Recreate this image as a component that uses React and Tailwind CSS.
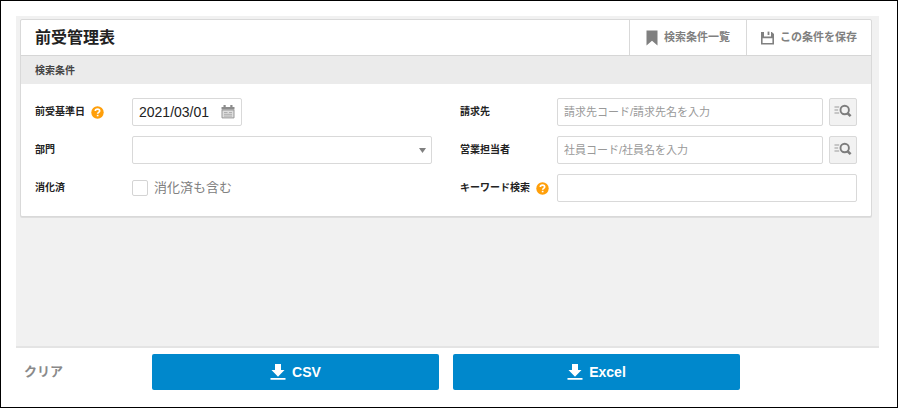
import { useState } from "react";

function BookmarkIcon() {
  return (
    <svg width="12" height="16" viewBox="0 0 12 16" fill="currentColor" aria-hidden="true">
      <path d="M0.5 0.5h11v15L6 10.8 0.5 15.5z" />
    </svg>
  );
}

function SaveIcon() {
  return (
    <svg width="13" height="14" viewBox="0 0 13 14" fill="currentColor" aria-hidden="true">
      <path d="M0 1h3v4.6h7V1h.8L13 3v10.5H0zM1.6 7.2v4.8h9.8V7.2z" fillRule="evenodd" />
      <path d="M6.6 0.6h1.8v3.4H6.6z" />
    </svg>
  );
}

function CalendarIcon() {
  return (
    <svg width="14" height="14" viewBox="0 0 14 14" aria-hidden="true">
      <path d="M0.5 2h13v2.6H.5z" fill="#8c8c8c" />
      <path d="M2.5 0h2.2v3H2.5zM9.3 0h2.2v3H9.3z" fill="#8c8c8c" />
      <path d="M1 5h12v7.9H1z" fill="#dedede" stroke="#979797" />
      <path d="M3 7.5h3.5M8 7.5h3M3 9.3h8M3 11.1h8" stroke="#a8a8a8" strokeWidth="0.9" />
    </svg>
  );
}

function ListSearchIcon() {
  return (
    <svg width="18" height="16" viewBox="0 0 18 16" fill="none" aria-hidden="true">
      <path d="M0.5 3h4.7M0.5 6h3.6M0.5 9h4.7" stroke="#999" strokeWidth="1.2" />
      <circle cx="10.7" cy="6" r="4.2" stroke="#7d7d7d" strokeWidth="1.9" />
      <path d="M13.2 8.8l3.4 3.4" stroke="#7d7d7d" strokeWidth="2.6" />
    </svg>
  );
}

function DownloadIcon() {
  return (
    <svg width="16" height="16" viewBox="0 0 16 16" fill="currentColor" aria-hidden="true">
      <path d="M5 0h6v6h3.5L8 12.8 1.5 6H5zM.5 14h15v1.8H.5z" />
    </svg>
  );
}

function HelpButton({ label }) {
  return (
    <button type="button" aria-label={label} className="shrink-0">
      <svg width="13" height="13" viewBox="0 0 13 13" fill="none" aria-hidden="true">
        <circle cx="6.5" cy="6.5" r="6.2" fill="#ff9f0a" />
        <path d="M4.3 5.1c0-1.3.9-2 2.2-2s2.2.7 2.2 1.8c0 1.4-2.1 1.4-2.1 2.9" stroke="#fff" strokeWidth="1.6" />
        <path d="M5.8 8.8h1.7v1.5H5.8z" fill="#fff" />
      </svg>
    </button>
  );
}

function Field({ id, label, help, children }) {
  return (
    <div className="flex h-7 items-center">
      <div className="flex w-[97px] shrink-0 items-center gap-1.5">
        <label htmlFor={id} className="text-[10px] leading-4 font-bold whitespace-nowrap">{label}</label>
        {help && <HelpButton label={`${label}のヘルプ`} />}
      </div>
      {children}
    </div>
  );
}

const inputClass =
  "h-7 min-w-0 flex-1 rounded-xs border border-[#d9d9d9] bg-white px-1.5 text-[11px] text-[#222] placeholder-[#999] focus:outline-none focus:border-[#0088cc]";

function LookupField({ id, label, placeholder }) {
  return (
    <Field id={id} label={label}>
      <input id={id} type="text" placeholder={placeholder} className={inputClass} />
      <button
        type="button"
        aria-label={`${label}を検索`}
        className="ml-1.5 flex h-7 w-7 shrink-0 items-center justify-center rounded-xs border border-[#d9d9d9] bg-[#f2f2f2]"
      >
        <ListSearchIcon />
      </button>
    </Field>
  );
}

function App() {
  const [date, setDate] = useState("2021/03/01");
  const [includeDone, setIncludeDone] = useState(false);

  return (
    <div className="flex min-h-screen flex-col border border-black bg-white pt-[15px] pr-[18px] pl-[15px] font-['Liberation_Sans','Noto_Sans_CJK_JP',sans-serif] text-[#222]">
      <main className="flex-1 border-b-2 border-[#e4e4e4] bg-[#f1f1f1] pt-[3px] pr-[7px] pb-6 pl-1">
        <section className="rounded-xs border border-[#d9d9d9] bg-white shadow-[0_1px_0_#dedede]">
          {/* Title bar */}
          <header className="flex h-9 items-stretch border-b border-[#d6d6d6]">
            <h1 className="flex flex-1 items-center pl-3.5 text-base leading-5 font-bold">前受管理表</h1>
            <button type="button" className="flex items-center gap-1.5 border-l border-[#d9d9d9] px-4 text-[11px] font-bold text-[#808080]">
              <BookmarkIcon />
              検索条件一覧
            </button>
            <button type="button" className="flex items-center gap-1.5 border-l border-[#d9d9d9] px-3.5 text-[11px] font-bold text-[#808080]">
              <SaveIcon />
              この条件を保存
            </button>
          </header>
          <h2 className="flex h-7 items-center bg-[#ebebeb] pl-3.5 text-[10px] font-bold text-[#444]">検索条件</h2>

          {/* Search conditions */}
          <form className="grid grid-cols-2 gap-x-7 gap-y-2.5 p-3.5">
            <Field id="baseDate" label="前受基準日" help>
              <div className="flex h-7 w-[110px] items-center rounded-xs border border-[#d9d9d9] px-1.5">
                <input
                  id="baseDate"
                  type="text"
                  value={date}
                  onChange={(e) => setDate(e.target.value)}
                  className="min-w-0 flex-1 text-sm focus:outline-none"
                />
                <button type="button" aria-label="カレンダーを開く" className="shrink-0">
                  <CalendarIcon />
                </button>
              </div>
            </Field>
            <LookupField id="billing" label="請求先" placeholder="請求先コード/請求先名を入力" />

            <Field id="department" label="部門">
              <div className="relative flex flex-1">
                <select id="department" className={`${inputClass} appearance-none`}>
                  <option value=""></option>
                </select>
                <svg width="7" height="5" viewBox="0 0 7 5" className="pointer-events-none absolute top-3 right-1.5" aria-hidden="true">
                  <path d="M0 0h7L3.5 5z" fill="#808080" />
                </svg>
              </div>
            </Field>
            <LookupField id="salesRep" label="営業担当者" placeholder="社員コード/社員名を入力" />

            <Field id="includeDone" label="消化済">
              <input
                id="includeDone"
                type="checkbox"
                checked={includeDone}
                onChange={(e) => setIncludeDone(e.target.checked)}
                className="h-4 w-4 appearance-none rounded-xs border border-[#d4d4d4] bg-white checked:bg-[#0088cc]"
              />
              <label htmlFor="includeDone" className="ml-1.5 text-[13px] leading-5 text-[#808080]">消化済も含む</label>
            </Field>
            <Field id="keyword" label="キーワード検索" help>
              <input id="keyword" type="text" className={inputClass} />
            </Field>
          </form>
        </section>
      </main>

      {/* Actions */}
      <footer className="flex items-center pt-1.5 pr-[139px] pb-[17px] pl-2">
        <button type="button" className="w-32 shrink-0 text-left text-[13px] leading-5 font-bold text-[#8a8a8a]">クリア</button>
        <div className="flex flex-1 gap-3.5">
          <button type="button" className="flex h-9 flex-1 items-center justify-center gap-1.5 rounded-xs bg-[#0088cc] text-sm font-bold text-white">
            <DownloadIcon />
            CSV
          </button>
          <button type="button" className="flex h-9 flex-1 items-center justify-center gap-1.5 rounded-xs bg-[#0088cc] text-sm font-bold text-white">
            <DownloadIcon />
            Excel
          </button>
        </div>
      </footer>
    </div>
  );
}

export default App;
